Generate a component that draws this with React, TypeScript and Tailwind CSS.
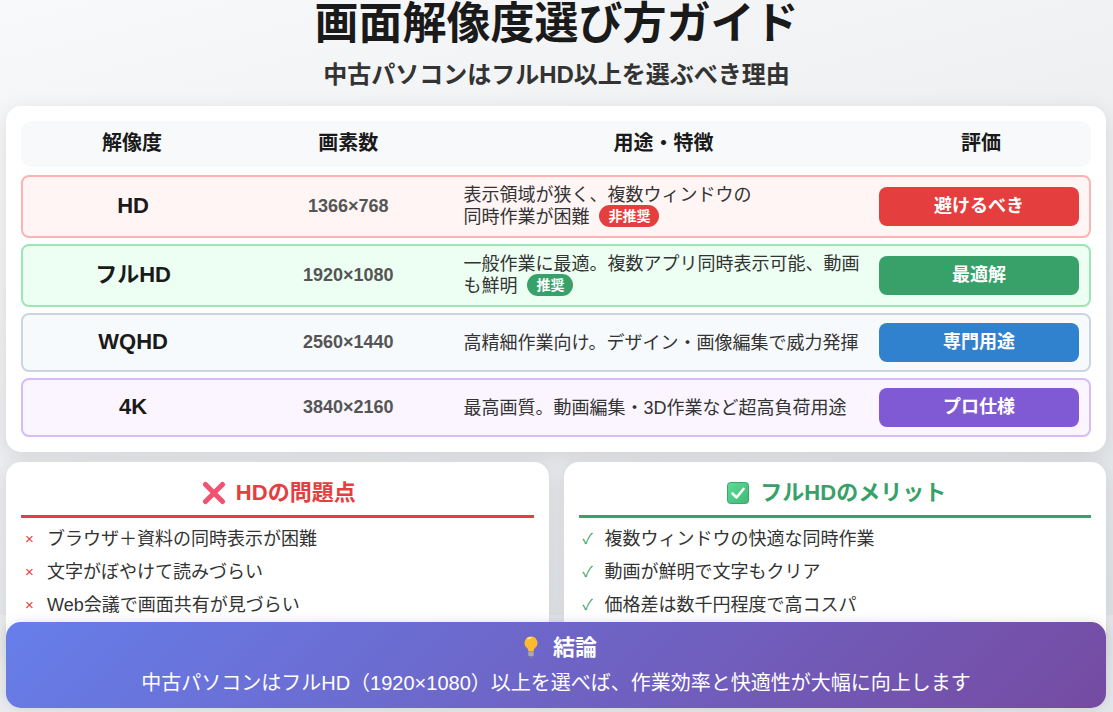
const rows = [
  {
    name: "HD",
    pixels: "1366×768",
    desc: (
      <>
        表示領域が狭く、複数ウィンドウの
        <br />
        同時作業が困難
      </>
    ),
    badge: "非推奨",
    badgeClass: "bg-[#e53e3e]",
    rating: "避けるべき",
    rowClass: "bg-[#fff5f5] border-[#feb2b2] h-[62.6px]",
    btnClass: "bg-[#e53e3e]",
  },
  {
    name: "フルHD",
    pixels: "1920×1080",
    desc: <>一般作業に最適。複数アプリ同時表示可能、動画も鮮明</>,
    badge: "推奨",
    badgeClass: "bg-[#38a169]",
    rating: "最適解",
    rowClass: "bg-[#ecfff2] border-[#9ae6b4] h-[62.6px]",
    btnClass: "bg-[#38a169]",
  },
  {
    name: "WQHD",
    pixels: "2560×1440",
    desc: <>高精細作業向け。デザイン・画像編集で威力発揮</>,
    rating: "専門用途",
    rowClass: "bg-[#f7fafc] border-[#cbd5e0] h-[58.4px]",
    btnClass: "bg-[#3182ce]",
  },
  {
    name: "4K",
    pixels: "3840×2160",
    desc: <>最高画質。動画編集・3D作業など超高負荷用途</>,
    rating: "プロ仕様",
    rowClass: "bg-[#faf5ff] border-[#d6bcfa] h-[58.4px]",
    btnClass: "bg-[#805ad5]",
  },
];

function CrossEmoji() {
  return (
    <svg width="24" height="24" viewBox="0 0 24 24" className="shrink-0">
      <path d="M3.5 3.5 L20.5 20.5 M20.5 3.5 L3.5 20.5" stroke="#f4506f" strokeWidth="5" strokeLinecap="round" />
    </svg>
  );
}

function CheckEmoji() {
  return (
    <svg width="24" height="24" viewBox="0 0 24 24" className="shrink-0">
      <defs>
        <linearGradient id="checkFill" x1="0" y1="0" x2="1" y2="1">
          <stop offset="0" stopColor="#5cdc94" />
          <stop offset="1" stopColor="#3fb877" />
        </linearGradient>
      </defs>
      <rect x="1.5" y="1.5" width="21" height="21" rx="3" fill="url(#checkFill)" stroke="#3aa86b" strokeWidth="1" />
      <path d="M6.5 12.5 L10.5 16.5 L17.5 8" stroke="#fff" strokeWidth="2.6" fill="none" strokeLinecap="round" strokeLinejoin="round" />
    </svg>
  );
}

function BulbEmoji() {
  return (
    <svg width="14" height="23" viewBox="0 0 14 23" className="shrink-0">
      <path d="M7 .5a6.5 6.5 0 0 0-4 11.6c1 .9 1.2 1.900 1.300 3.400h5.400c.1-1.500.3-2.500 1.300-3.400A6.500 6.500 0 0 0 7 .5z" fill="#fdb92f" />
      <path d="M4 2.800A4.500 4.500 0 0 1 7 1.800" stroke="#ffe9a8" strokeWidth="1.500" fill="none" strokeLinecap="round" />
      <rect x="4.200" y="16" width="5.600" height="4" rx="1" fill="#a9a7b4" />
      <rect x="5.400" y="20" width="3.200" height="2" rx="1" fill="#85838f" />
    </svg>
  );
}

function SidePanel({
  icon,
  title,
  color,
  mark,
  items,
}: {
  icon: React.ReactNode;
  title: string;
  color: string;
  mark: string;
  items: string[];
}) {
  const isRed = color === "red";
  return (
    <div className="h-[200px] rounded-[15px] bg-white p-[15px] shadow-[0_4px_20px_rgba(0,0,0,0.1)]">
      <div
        className={`flex h-[41px] items-center justify-center gap-[10px] border-b-[3px] pb-[5px] pl-[3px] text-[22px] font-bold leading-none ${
          isRed ? "border-[#e53e3e] text-[#e53e3e]" : "border-[#38a169] text-[#38a169]"
        }`}
      >
        {icon}
        <span>{title}</span>
      </div>
      <ul className="mt-[5px]">
        {items.map((item) => (
          <li key={item} className="flex h-[33px] items-center text-[18px] text-[#333]">
            <span className={`w-[26px] pl-[4px] text-[15px] ${isRed ? "text-[#e53e3e]" : "text-[#38a169]"}`}>{mark}</span>
            {item}
          </li>
        ))}
      </ul>
    </div>
  );
}

export default function App() {
  return (
    <div className="relative h-[712px] w-[1113px] overflow-hidden bg-[linear-gradient(166deg,#f8f9fa,#dde0e4)] px-[6px] font-['Liberation_Sans','Noto_Sans_CJK_JP',sans-serif] text-[#1a1a1a]">
      <div className="text-center">
        <h1 className="h-[48px] text-[44px] font-bold leading-[48px]">画面解像度選び方ガイド</h1>
        <p className="mt-[9px] h-[36px] text-[24px] font-bold leading-[36px] text-[#333]">中古パソコンはフルHD以上を選ぶべき理由</p>
      </div>

      <div className="mt-[13px] flex w-[1100px] flex-col rounded-[15px] bg-white p-[15px] shadow-[0_4px_20px_rgba(0,0,0,0.1)]">
        <div className="grid h-[46px] grid-cols-[1fr_1fr_2fr_1fr] items-center gap-[15px] rounded-[10px] bg-[#f8f9fa] px-[12px] pb-[2px] text-center text-[20px] font-bold">
          <div className="pr-[2px]">解像度</div>
          <div>画素数</div>
          <div>用途・特徴</div>
          <div className="pl-[4px]">評価</div>
        </div>
        <div className="mt-[8px] flex flex-col gap-[6.6px]">
          {rows.map((row) => (
            <div
              key={row.name}
              className={`grid grid-cols-[1fr_1fr_2fr_1fr] items-center gap-[15px] rounded-[8px] border-2 px-[10px] ${row.rowClass}`}
            >
              <div className="pb-[2px] text-center text-[22px] font-bold">{row.name}</div>
              <div className="text-center text-[18px] font-bold text-[#555]">{row.pixels}</div>
              <div className="text-[18px] leading-[22px] text-[#333]">
                {row.desc}
                {row.badge && (
                  <span className={`ml-[10px] -mt-px inline-block h-[22px] rounded-full px-[9px] align-top text-[14px] font-bold leading-[22px] text-white ${row.badgeClass}`}>
                    {row.badge}
                  </span>
                )}
              </div>
              <div className={`flex h-[39px] items-center justify-center rounded-[8px] text-[18px] font-bold text-white ${row.btnClass}`}>
                {row.rating}
              </div>
            </div>
          ))}
        </div>
      </div>

      <div className="mt-[10px] grid w-[1100px] grid-cols-2 gap-[15px]">
        <SidePanel
          icon={<CrossEmoji />}
          title="HDの問題点"
          color="red"
          mark="×"
          items={["ブラウザ＋資料の同時表示が困難", "文字がぼやけて読みづらい", "Web会議で画面共有が見づらい"]}
        />
        <SidePanel
          icon={<CheckEmoji />}
          title="フルHDのメリット"
          color="green"
          mark="✓"
          items={["複数ウィンドウの快適な同時作業", "動画が鮮明で文字もクリア", "価格差は数千円程度で高コスパ"]}
        />
      </div>

      <div className="absolute inset-x-0 bottom-0 h-[97px] bg-white/20 px-[6px] pt-[7px]">
        <div className="flex h-[86px] w-[1100px] flex-col items-center justify-center rounded-[15px] bg-[linear-gradient(135deg,#667eea,#764ba2)] text-white shadow-[0_0_12px_rgba(0,0,0,0.12)]">
          <div className="flex items-center gap-[15px] pl-[9px] text-[22px] font-bold leading-[30px]">
            <BulbEmoji />
            <span>結論</span>
          </div>
          <p className="mt-[5px] text-[20px] leading-[30px]">中古パソコンはフルHD（1920×1080）以上を選べば、作業効率と快適性が大幅に向上します</p>
        </div>
      </div>
    </div>
  );
}
